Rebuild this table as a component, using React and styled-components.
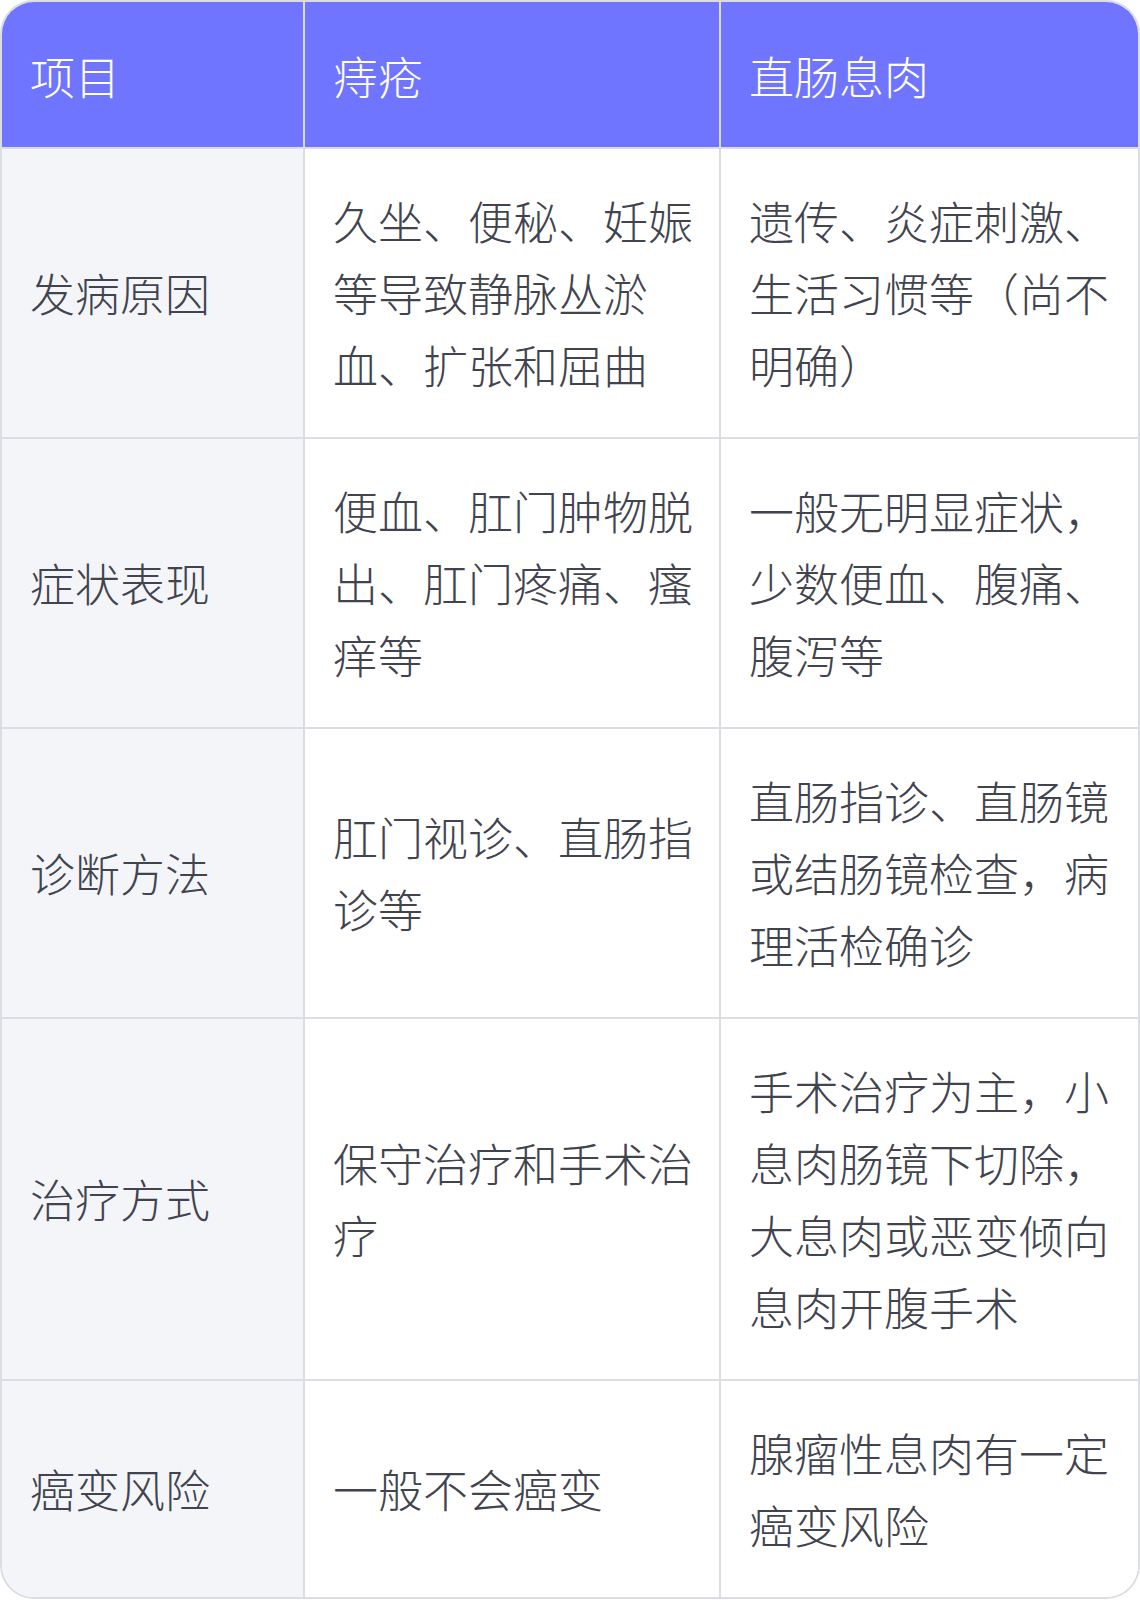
import React from "react";
import styled, { createGlobalStyle } from "styled-components";

const Global = createGlobalStyle`
  html, body { margin: 0; padding: 0; background: #ffffff; }
  body { font-family: "Noto Sans CJK SC", "Noto Sans", sans-serif; }
`;

const Frame = styled.div`
  width: 1140px;
  box-sizing: border-box;
  border: 2px solid #dcdde3;
  border-radius: 34px;
  overflow: hidden;
`;

const Table = styled.table`
  width: 100%;
  border-collapse: collapse;
  table-layout: fixed;
  font-family: "Noto Sans CJK SC", "Noto Sans", sans-serif;
  font-weight: 300;
  font-size: 45px;
  line-height: 72px;
`;

const Col = styled.col`
  width: ${(p) => p.$w};
`;

const HeadCell = styled.th`
  background: #7075ff;
  color: #ffffff;
  font-weight: 300;
  text-align: left;
  padding: 38px 22px 35px 28px;
  border-right: 2px solid #dcdde3;
  border-bottom: 2px solid #dcdde3;
  &:last-child { border-right: none; }
`;

const Row = styled.tr`
  &:last-child td { border-bottom: none; }
`;

const Cell = styled.td`
  background: ${(p) => (p.$label ? "#f4f5f9" : "#ffffff")};
  color: #41444f;
  padding: 36px 22px 36px 28px;
  vertical-align: middle;
  border-right: 2px solid #dcdde3;
  border-bottom: 2px solid #dcdde3;
  word-break: break-all;
  &:last-child { border-right: none; }
`;

const rows = [
  ["发病原因", "久坐、便秘、妊娠等导致静脉丛淤血、扩张和屈曲", "遗传、炎症刺激、生活习惯等（尚不明确）"],
  ["症状表现", "便血、肛门肿物脱出、肛门疼痛、瘙痒等", "一般无明显症状，少数便血、腹痛、腹泻等"],
  ["诊断方法", "肛门视诊、直肠指诊等", "直肠指诊、直肠镜或结肠镜检查，病理活检确诊"],
  ["治疗方式", "保守治疗和手术治疗", "手术治疗为主，小息肉肠镜下切除，大息肉或恶变倾向息肉开腹手术"],
  ["癌变风险", "一般不会癌变", "腺瘤性息肉有一定癌变风险"],
];

export default function App() {
  return (
    <>
      <Global />
      <Frame>
        <Table>
          <colgroup>
            <Col $w="302px" />
            <Col $w="416px" />
            <Col $w="auto" />
          </colgroup>
          <thead>
            <tr>
              <HeadCell>项目</HeadCell>
              <HeadCell>痔疮</HeadCell>
              <HeadCell>直肠息肉</HeadCell>
            </tr>
          </thead>
          <tbody>
            {rows.map((r) => (
              <Row key={r[0]}>
                <Cell $label>{r[0]}</Cell>
                <Cell>{r[1]}</Cell>
                <Cell>{r[2]}</Cell>
              </Row>
            ))}
          </tbody>
        </Table>
      </Frame>
    </>
  );
}
